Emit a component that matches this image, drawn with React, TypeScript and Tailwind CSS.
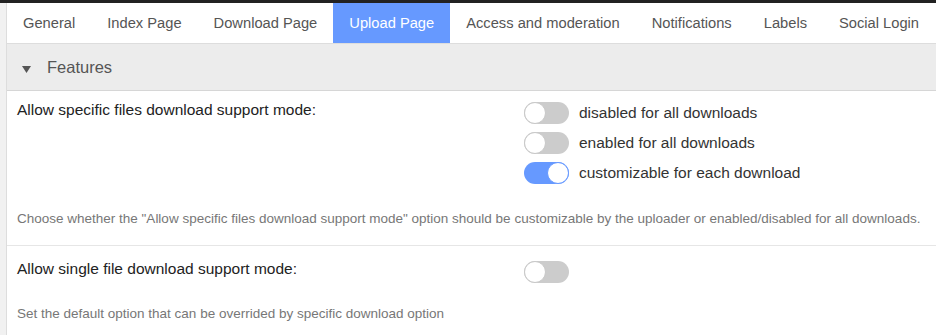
const TABS = [
  "General",
  "Index Page",
  "Download Page",
  "Upload Page",
  "Access and moderation",
  "Notifications",
  "Labels",
  "Social Login",
];

function Toggle({ on }: { on?: boolean }) {
  return (
    <div
      className={`relative h-[22px] w-[45px] shrink-0 rounded-full ${
        on ? "bg-[#6699ff]" : "bg-[#cccccc]"
      }`}
    >
      <div
        className={`absolute top-0 h-[22px] w-[22px] rounded-full bg-white border ${
          on ? "right-0 border-[#6699ff]" : "left-0 border-[#c8c8c8]"
        }`}
      />
    </div>
  );
}

export default function App() {
  return (
    <div className="flex h-[335px] w-[936px] flex-col overflow-hidden bg-white font-['Liberation_Sans',sans-serif]">
      <div className="h-[3px] shrink-0 bg-[#222]" />
      <div className="flex min-h-0 flex-1">
        <div className="w-[7px] shrink-0 border-r border-[#dddddd] bg-[#f1f1f1]" />
        <div className="flex min-w-0 flex-1 flex-col">
          {/* tabs */}
          <div className="flex h-[41px] shrink-0 border-b border-[#dddddd]">
            {TABS.map((t) => (
              <div
                key={t}
                className={`flex items-center whitespace-nowrap px-4 pt-[1px] text-[14.7px] ${
                  t === "Upload Page" ? "bg-[#6699ff] text-white" : "text-[#555]"
                }`}
              >
                {t}
              </div>
            ))}
          </div>

          {/* section header */}
          <div className="flex h-[47px] shrink-0 items-center gap-4 border-b border-[#d6d6d6] bg-[#ececec] pl-[15px]">
            <svg width="9" height="7" viewBox="0 0 9 7" className="mt-[5px]">
              <polygon points="0,0 9,0 4.5,7" fill="#555" />
            </svg>
            <span className="text-[16.5px] text-[#555]">Features</span>
          </div>

          {/* option 1 */}
          <div className="shrink-0 border-b border-[#e6e6e6] px-[10px] pb-[17px] pt-[7px]">
            <div className="flex">
              <div className="w-[507px] shrink-0 text-[15.5px] text-[#222]">
                Allow specific files download support mode:
              </div>
              <div className="flex flex-col">
                {[
                  { label: "disabled for all downloads", on: false },
                  { label: "enabled for all downloads", on: false },
                  { label: "customizable for each download", on: true },
                ].map((o) => (
                  <div key={o.label} className="flex h-[30px] items-center gap-[10px]">
                    <Toggle on={o.on} />
                    <span className="text-[15.5px] text-[#333]">{o.label}</span>
                  </div>
                ))}
              </div>
            </div>
            <p className="mt-[22px] whitespace-nowrap text-[13.5px] leading-[18px] text-[#777]">
              Choose whether the "Allow specific files download support mode" option should be customizable by the uploader or enabled/disabled for all downloads.
            </p>
          </div>

          {/* option 2 */}
          <div className="shrink-0 px-[10px] pt-[11px]">
            <div className="flex">
              <div className="w-[507px] shrink-0 text-[15.5px] text-[#222]">
                Allow single file download support mode:
              </div>
              <div className="flex h-[30px] items-center">
                <Toggle />
              </div>
            </div>
            <p className="mt-[18px] whitespace-nowrap text-[13.5px] leading-[18px] text-[#777]">
              Set the default option that can be overrided by specific download option
            </p>
          </div>
        </div>
      </div>
    </div>
  );
}
